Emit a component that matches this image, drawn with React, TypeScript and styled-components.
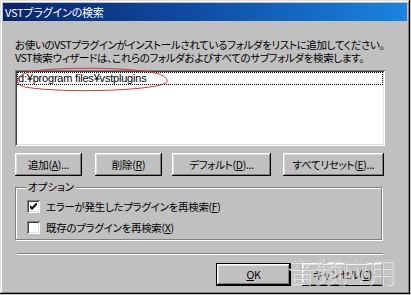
import React from 'react'
import styled, { createGlobalStyle } from 'styled-components'

/* --------------------------------
 * Global
 * -------------------------------- */

const GlobalStyle = createGlobalStyle`
  html, body {
    margin: 0;
    padding: 0;
    background: #c0c0c0;
  }
  body {
    font-family: "Noto Sans CJK JP", "Liberation Sans", sans-serif;
    font-size: 10.5px;
    color: #000;
  }
`

/* --------------------------------
 * Styled Components
 * -------------------------------- */

const Window = styled.div`
  position: relative;
  box-sizing: border-box;
  width: 410px;
  height: 294px;
  padding: 3px;
  background: #c0c0c0;
  box-shadow:
    inset -1px -1px #000,
    inset 1px 1px #dfdfdf,
    inset -2px -2px #808080,
    inset 2px 2px #fff;
  display: flex;
  flex-direction: column;
`

const TitleBar = styled.div`
  height: 18px;
  display: flex;
  align-items: center;
  padding-left: 2px;
  background: linear-gradient(90deg, #0a246a 0%, #0f4fa6 50%, #1a84e0 100%);
  color: #fff;
  font-size: 11px;
  font-feature-settings: 'palt';
  letter-spacing: -0.2px;
`

const Content = styled.div`
  display: flex;
  flex-direction: column;
  padding: 17px 0 0 12px;
  width: 370px;
`

const Description = styled.p`
  margin: 0;
  line-height: 13px;
  font-feature-settings: 'palt';
  letter-spacing: -0.35px;
  white-space: nowrap;
`

const ListBox = styled.div`
  position: relative;
  box-sizing: border-box;
  margin-top: 6px;
  height: 76px;
  padding: 2px;
  background: #fff;
  box-shadow:
    inset 1px 1px #808080,
    inset -1px -1px #fff,
    inset 2px 2px #404040,
    inset -2px -2px #dfdfdf;
`

const ListItem = styled.div<{ $focused: boolean }>`
  height: 13px;
  line-height: 13px;
  padding-left: 1px;
  outline: ${({ $focused }) => ($focused ? '1px dotted #000' : 'none')};
  outline-offset: -1px;
  font-family: "Liberation Sans", "Noto Sans CJK JP", sans-serif;
  font-size: 11px;
  letter-spacing: -0.2px;
`

const Annotation = styled.svg`
  position: absolute;
  left: -2px;
  top: -3px;
  pointer-events: none;
`

const ButtonRow = styled.div`
  display: flex;
  margin-top: 7px;
`

const Button = styled.button<{ $width: number; $gap?: number; $default?: boolean }>`
  box-sizing: border-box;
  width: ${({ $width }) => $width}px;
  height: 23px;
  margin-left: ${({ $gap }) => $gap ?? 0}px;
  padding: 0;
  border: ${({ $default }) => ($default ? '1px solid #000' : 'none')};
  background: #c0c0c0;
  box-shadow:
    inset -1px -1px #000,
    inset 1px 1px #fff,
    inset -2px -2px #808080,
    inset 2px 2px #dfdfdf;
  font-family: "Noto Sans CJK JP", "Liberation Sans", sans-serif;
  font-size: 10.5px;
  font-feature-settings: 'palt';
  letter-spacing: -0.3px;
  color: #000;

  u {
    text-underline-offset: 1px;
  }
`

const GroupBox = styled.div`
  position: relative;
  box-sizing: border-box;
  margin-top: 11px;
  height: 53px;
  border: 1px solid #808080;
  box-shadow:
    inset 1px 1px #fff,
    1px 1px #fff;
  width: 367px;
  padding: 12px 0 0 11px;
  display: flex;
  flex-direction: column;
  gap: 8px;
`

const GroupLabel = styled.span`
  position: absolute;
  left: 10px;
  top: -8px;
  padding: 0 2px;
  background: #c0c0c0;
  line-height: 14px;
  font-feature-settings: 'palt';
`

const CheckRow = styled.label`
  display: flex;
  align-items: center;
  gap: 6px;
  height: 13px;
  font-feature-settings: 'palt';
  letter-spacing: -0.3px;
`

const CheckBox = styled.span`
  box-sizing: border-box;
  width: 13px;
  height: 13px;
  flex: none;
  display: flex;
  align-items: center;
  justify-content: center;
  background: #fff;
  box-shadow:
    inset 1px 1px #808080,
    inset -1px -1px #fff,
    inset 2px 2px #404040,
    inset -2px -2px #dfdfdf;
`

const Separator = styled.div`
  margin: 13px 0 0 2px;
  width: 366px;
  height: 1px;
  background: #808080;
  border-bottom: 1px solid #fff;
`

const Footer = styled.div`
  display: flex;
  justify-content: flex-end;
  margin-top: 8px;
  padding-right: 2px;
`

const Watermark = styled.div`
  position: absolute;
  left: 287px;
  top: 254px;
  line-height: 34px;
  font-family: "Noto Sans CJK SC", sans-serif;
  font-size: 28px;
  font-weight: 300;
  letter-spacing: -1px;
  color: rgba(120, 120, 120, 0.45);
  text-shadow: 0 0 1px #fff, 1px 1px 0 rgba(255, 255, 255, 0.6);
  pointer-events: none;
  white-space: nowrap;
`

/* --------------------------------
 * Component
 * -------------------------------- */

const CheckMark: React.FC = () => (
  <svg width="7" height="7" viewBox="0 0 7 7">
    <path d="M0 2 L0 5 L2 7 L7 2 L7 -1 L2 4 Z" fill="#000" />
  </svg>
)

export default function App() {
  return (
    <>
      <GlobalStyle />
      <Window>
        <TitleBar>VSTプラグインの検索</TitleBar>
        <Content>
          <Description>
            お使いのVSTプラグインがインストールされているフォルダをリストに追加してください。
            <br />
            VST検索ウィザードは、これらのフォルダおよびすべてのサブフォルダを検索します。
          </Description>

          <ListBox>
            <ListItem $focused>d:¥program files¥vstplugins</ListItem>
            <Annotation width="160" height="26" viewBox="0 0 160 26">
              <path
                d="M20 4 C60 -1 140 1 150 9 C158 14 154 17 143 19 C110 25 40 25 12 20 C1 17 1 8 20 4 Z"
                fill="none"
                stroke="#d23a3a"
                strokeWidth="1"
              />
            </Annotation>
          </ListBox>

          <ButtonRow>
            <Button $width={67}>
              追加(<u>A</u>)...
            </Button>
            <Button $width={67} $gap={13}>
              削除(<u>R</u>)
            </Button>
            <Button $width={99} $gap={10}>
              デフォルト(<u>D</u>)...
            </Button>
            <Button $width={101} $gap={12}>
              すべてリセット(<u>E</u>)...
            </Button>
          </ButtonRow>

          <GroupBox>
            <GroupLabel>オプション</GroupLabel>
            <CheckRow>
              <CheckBox>
                <CheckMark />
              </CheckBox>
              <span>
                エラーが発生したプラグインを再検索(<u>F</u>)
              </span>
            </CheckRow>
            <CheckRow>
              <CheckBox />
              <span>
                既存のプラグインを再検索(<u>X</u>)
              </span>
            </CheckRow>
          </GroupBox>

          <Separator />

          <Footer>
            <Button $width={75} $default>
              <u>O</u>K
            </Button>
            <Button $width={81} $gap={11}>
              キャンセル(<u>C</u>)
            </Button>
          </Footer>
        </Content>
        <Watermark>音频应用</Watermark>
      </Window>
    </>
  )
}
